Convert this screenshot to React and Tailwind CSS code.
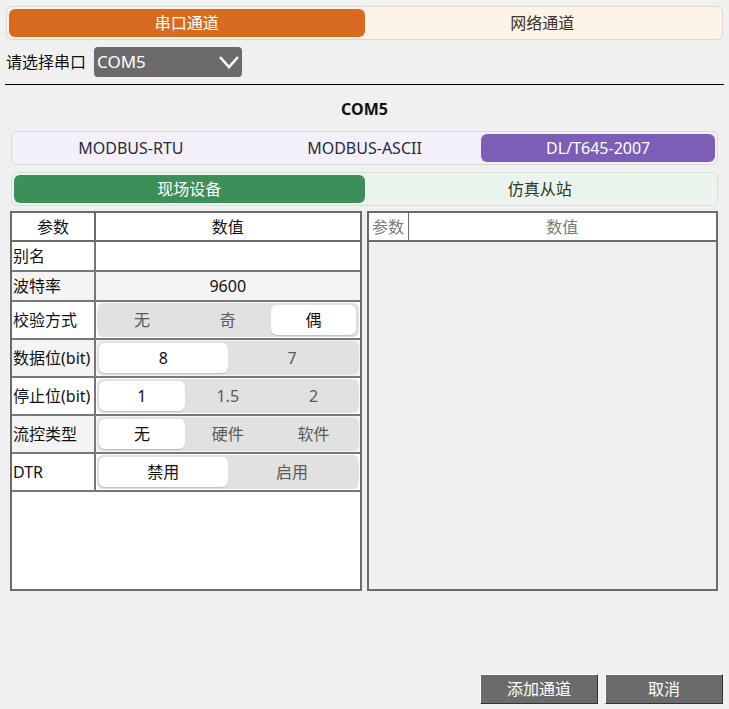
const font = { fontFamily: '"Noto Sans", "Noto Sans CJK SC", sans-serif' };

const Segment = ({ options, selected }) => {
  return (
    <div className="flex h-[34px] w-full rounded-md bg-[#e1e1e1] p-[2px]">
      {options.map((opt, i) => (
        <div
          key={opt}
          className={
            i === selected
              ? "flex flex-1 items-center justify-center rounded-md bg-white text-[16px] text-[#111] shadow-[0_1px_1px_rgba(0,0,0,0.15)]"
              : "flex flex-1 items-center justify-center text-[16px] text-[#5a5a5a]"
          }
        >
          {opt}
        </div>
      ))}
    </div>
  );
};

const rows = [
  { label: "别名", value: "", bg: "bg-white" },
  { label: "波特率", value: "9600", bg: "bg-[#f4f4f4]" },
  { label: "校验方式", seg: ["无", "奇", "偶"], sel: 2, bg: "bg-white" },
  { label: "数据位(bit)", seg: ["8", "7"], sel: 0, bg: "bg-[#f4f4f4]" },
  { label: "停止位(bit)", seg: ["1", "1.5", "2"], sel: 0, bg: "bg-white" },
  { label: "流控类型", seg: ["无", "硬件", "软件"], sel: 0, bg: "bg-[#f4f4f4]" },
  { label: "DTR", seg: ["禁用", "启用"], sel: 0, bg: "bg-white" },
];

export default function App() {
  return (
    <div style={font} className="flex h-[709px] w-[729px] flex-col bg-[#f0f0f0] text-[16px] text-[#111]">
      {/* channel type tabs */}
      <div className="mx-[6px] mt-[6px] flex h-[34px] rounded-md border border-[#d8d8d8] bg-[#fdf3e6] p-[2px]">
        <div className="flex flex-1 items-center justify-center rounded-md bg-[#d86b20] text-white">串口通道</div>
        <div className="flex flex-1 items-center justify-center text-[#3d3226]">网络通道</div>
      </div>

      {/* port select */}
      <div className="mt-[7px] flex h-[30px] items-center px-[6px]">
        <span>请选择串口</span>
        <div className="ml-[8px] flex h-[30px] w-[148px] items-center justify-between rounded-sm bg-[#6b6b6b] pl-[3px] pr-[2px] text-[17px] text-white">
          <span>COM5</span>
          <svg width="22" height="16" viewBox="0 0 22 16">
            <path d="M2 3 L11 13 L20 3" fill="none" stroke="white" strokeWidth="2.6" />
          </svg>
        </div>
      </div>

      <div className="mx-[5px] mt-[7px] border-t-[1.5px] border-black" />

      <div className="mt-[14px] flex h-[20px] items-center justify-center font-bold">COM5</div>

      {/* protocol tabs */}
      <div className="mx-[11px] mt-[12px] flex h-[34px] rounded-md border border-[#dadada] bg-[#f3f0fa] p-[2px]">
        <div className="flex flex-1 items-center justify-center text-[#2a2a3a]">MODBUS-RTU</div>
        <div className="flex flex-1 items-center justify-center text-[#2a2a3a]">MODBUS-ASCII</div>
        <div className="flex flex-1 items-center justify-center rounded-md bg-[#7b5fb6] text-white">DL/T645-2007</div>
      </div>

      {/* device tabs */}
      <div className="mx-[11px] mt-[7px] flex h-[34px] rounded-md border border-[#d8dfd9] bg-[#eaf4ec] p-[2px]">
        <div className="flex flex-1 items-center justify-center rounded-md bg-[#3d8f5a] text-white">现场设备</div>
        <div className="flex flex-1 items-center justify-center text-[#2c3a2e]">仿真从站</div>
      </div>

      {/* tables */}
      <div className="ml-[10px] mr-[11px] mt-[5px] flex h-[380px] gap-[5px]">
        <div className="flex flex-1 flex-col border-2 border-[#6b6b6b] bg-white">
          <div className="flex h-[29px] border-b-2 border-[#6b6b6b]">
            <div className="flex w-[84px] items-center justify-center border-r-2 border-[#6b6b6b]">参数</div>
            <div className="flex flex-1 items-center justify-center">数值</div>
          </div>
          {rows.map((r) => (
            <div key={r.label} className={`flex border-b-2 border-[#777] ${r.bg}`}>
              <div className={`flex w-[84px] items-center whitespace-nowrap border-r-2 border-[#777] pl-[1px] ${r.seg ? "h-[36px]" : "h-[28px]"}`}>
                {r.label}
              </div>
              <div className="flex flex-1 items-center justify-center px-[1px]">
                {r.seg ? <Segment options={r.seg} selected={r.sel} /> : r.value}
              </div>
            </div>
          ))}
        </div>

        <div className="flex flex-1 flex-col border-2 border-[#6b6b6b] bg-[#f0f0f0]">
          <div className="flex h-[29px] border-b-2 border-[#6b6b6b] bg-white text-[#7a7a7a]">
            <div className="flex w-[40px] items-center justify-center border-r border-[#6b6b6b]">参数</div>
            <div className="flex flex-1 items-center justify-center">数值</div>
          </div>
        </div>
      </div>

      {/* actions */}
      <div className="mb-[5px] mr-[6px] mt-auto flex justify-end gap-[7px]">
        <button className="h-[30px] w-[118px] border border-b-[#333] border-l-white border-r-[#333] border-t-white bg-[#6b6b6b] text-white">
          添加通道
        </button>
        <button className="h-[30px] w-[118px] border border-b-[#333] border-l-white border-r-[#333] border-t-white bg-[#6b6b6b] text-white">
          取消
        </button>
      </div>
    </div>
  );
}
